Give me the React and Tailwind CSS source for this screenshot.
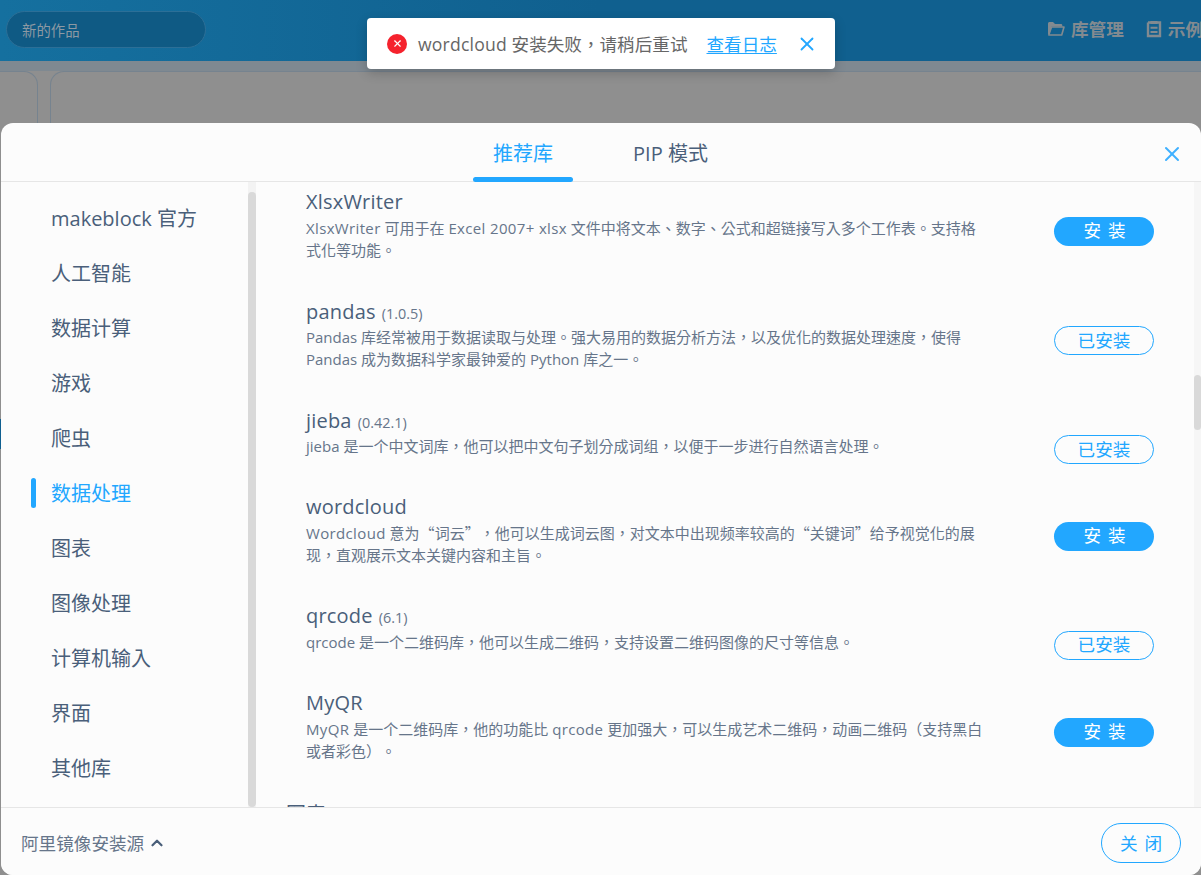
import React from 'react';
import { X, ChevronUp } from 'lucide-react';

const categories = ['makeblock 官方', '人工智能', '数据计算', '游戏', '爬虫', '数据处理', '图表', '图像处理', '计算机输入', '界面', '其他库'];

// full-width quotes, Open Sans would draw narrow ones
const Q = ({ children }) => <span className="font-['Noto_Sans_CJK_SC']">{children}</span>;
const L = ({ children }) => <span className="tracking-[0.35px]">{children}</span>;

const packages = [
  { name: 'XlsxWriter', gap: 'mb-[0.5px]', desc: <><L>XlsxWriter</L> 可用于在 <L>Excel 2007+ xlsx</L> 文件中将文本、数字、公式和超链接写入多个工作表。支持格<br />式化等功能。</>, installed: false },
  { name: 'pandas', version: '(1.0.5)', desc: <>Pandas 库经常被用于数据读取与处理。强大易用的数据分析方法，以及优化的数据处理速度，使得<br />Pandas 成为数据科学家最钟爱的 Python 库之一。</>, installed: true },
  { name: 'jieba', version: '(0.42.1)', gap: '-mb-[0.5px]', desc: 'jieba 是一个中文词库，他可以把中文句子划分成词组，以便于一步进行自然语言处理。', installed: true },
  { name: 'wordcloud', desc: <><L>Wordcloud</L> 意为<Q>“</Q>词云<Q>”</Q>，他可以生成词云图，对文本中出现频率较高的<Q>“</Q>关键词<Q>”</Q>给予视觉化的展<br />现，直观展示文本关键内容和主旨。</>, installed: false },
  { name: 'qrcode', version: '(6.1)', desc: 'qrcode 是一个二维码库，他可以生成二维码，支持设置二维码图像的尺寸等信息。', installed: true },
  { name: 'MyQR', desc: <><L>MyQR</L> 是一个二维码库，他的功能比 <L>qrcode</L> 更加强大，可以生成艺术二维码，动画二维码（支持黑白<br />或者彩色）。</>, installed: false },
];

function FolderIcon() {
  return (
    <svg width="18" height="16" viewBox="0 0 18 16" className="shrink-0">
      <path d="M1 2.500C1 1.700 1.700 1 2.500 1H6l2 2h6c.8 0 1.300.6 1.300 1.300V5.500H4.500L2.600 13H1z" fill="#828a90" />
      <path d="M4.500 6h12.500l-2.300 8H1.800z" fill="none" stroke="#828a90" strokeWidth="1.600" strokeLinejoin="round" />
    </svg>
  );
}

function ListIcon() {
  return (
    <svg width="16" height="18" viewBox="0 0 16 18" className="shrink-0">
      <path d="M2 2.500h3.500M10.500 2.500H14V16H2V2.500" fill="none" stroke="#828a90" strokeWidth="2.400" />
      <path d="M4.500 1h7v3h-7zM4.500 6.700h7v2h-7zM4.500 11h7v2h-7z" fill="#828a90" />
    </svg>
  );
}

function PackageRow({ pkg }) {
  return (
    <div className={`flex items-start ${pkg.gap || ''}`}>
      <div className="w-[680px] shrink-0 pb-[38.5px]">
        <div className="h-[24px] leading-[24px] text-[20px] tracking-[0.2px] text-[#4a5f7a]">
          {pkg.name}
          {pkg.version && <span className="ml-[6px] text-[14.4px] tracking-normal text-[#66758a]">{pkg.version}</span>}
        </div>
        <p className="mt-[2.5px] text-[15px] leading-[22px] text-[#66758a] whitespace-nowrap [text-spacing-trim:space-all]">{pkg.desc}</p>
      </div>
      <div className="ml-[68px] mt-[26.5px] h-0 shrink-0">
        {pkg.installed ? (
          <button className="w-[100px] h-[29px] rounded-full border border-[#22a7ff] text-[17.6px] leading-none text-[#22a7ff]">已安装</button>
        ) : (
          <button className="w-[100px] h-[29px] rounded-full bg-[#22a7ff] pl-[8px] text-[17.6px] leading-none text-white tracking-[7px]">安装</button>
        )}
      </div>
    </div>
  );
}

export default function App() {
  return (
    <div className="relative w-[1201px] h-[875px] overflow-hidden bg-[#8f8f8f] font-['Open_Sans','Noto_Sans_CJK_TC',sans-serif]">
      {/* page behind the modal */}
      <div className="flex items-center justify-between h-[61px] bg-gradient-to-r from-[#15709f] via-[#10608f] to-[#10608f] pl-[6px]">
        <div className="w-[200px] h-[37px] -mt-[2px] rounded-full border border-[#2c6f97] bg-[#0f5a84] pl-[15px] leading-[37px] text-[14.4px] text-[#8c99a3]">新的作品</div>
        <div className="flex items-center -mt-[2px] w-[154px] shrink-0 text-[17.6px] font-bold text-[#828a90] whitespace-nowrap overflow-hidden">
          <FolderIcon />
          <span className="ml-[6px]">库管理</span>
          <span className="ml-[22px]"><ListIcon /></span>
          <span className="ml-[6px]">示例</span>
        </div>
      </div>
      <div className="h-[10px] bg-[#7f8991]" />
      <div className="flex gap-[12px]">
        <div className="w-[38px] h-[60px] rounded-tr-[14px] border-t border-r border-[#76838f] bg-[#8f8f8f]" />
        <div className="flex-1 h-[60px] rounded-tl-[14px] border-t border-l border-[#76838f] bg-[#8f8f8f]" />
      </div>
      <div className="absolute left-0 top-[419px] w-[1px] h-[30px] bg-[#0f5f90]" />

      {/* toast */}
      <div className="absolute left-[367px] top-[18px] z-20 flex items-center w-[468px] h-[51px] rounded-[4px] bg-white pl-[20px] shadow-[0_4px_12px_rgba(0,0,0,0.2)]">
        <span className="flex items-center justify-center w-[20px] h-[20px] rounded-full bg-[#f5222d] text-white">
          <X size={11} strokeWidth={2.5} />
        </span>
        <span className="ml-[11px] pt-[1px] text-[17.6px] text-[#666666]"><span className="tracking-[0.2px]">wordcloud</span> 安装失败，请稍后重试</span>
        <a className="ml-[19px] pt-[1px] text-[17.6px] text-[#22a7ff] underline underline-offset-2">查看日志</a>
        <X size={22} strokeWidth={2} className="ml-[19px] text-[#22a7ff]" />
      </div>

      {/* modal */}
      <div className="absolute left-[1px] top-[123px] z-10 flex flex-col w-[1200px] h-[752px] rounded-[12px] bg-[#fcfcfc] overflow-hidden">
        <div className="relative flex justify-center shrink-0 h-[59px] border-b border-[#e6e6e6]">
          <div className="flex gap-[60px] ml-[-21px]">
            <div className="relative w-[100px] text-center leading-[62px] text-[20px] text-[#22a7ff]">
              推荐库
              <div className="absolute left-0 right-0 bottom-[-1px] h-[5px] rounded-full bg-[#22a7ff]" />
            </div>
            <div className="leading-[62px] text-[20px] text-[#4a5f7a]">PIP 模式</div>
          </div>
          <X size={24} strokeWidth={2} className="absolute right-[17px] top-[19px] text-[#3fb0ff]" />
        </div>

        <div className="flex flex-1 min-h-0">
          <div className="relative w-[247px] shrink-0 pt-[9px]">
            {categories.map((c) => (
              <div key={c} className={`relative h-[55px] pl-[50px] leading-[55px] text-[20px] ${c === '数据处理' ? 'text-[#22a7ff]' : 'text-[#4a5f7a]'}`}>
                {c === '数据处理' && <div className="absolute left-[30px] top-[12px] w-[5px] h-[30px] rounded-full bg-[#22a7ff]" />}
                {c}
              </div>
            ))}
          </div>
          <div className="w-[8px] shrink-0 bg-[#f3f3f3] pt-[10px]">
            <div className="h-full rounded-full bg-[#d9d9d9]" />
          </div>
          <div className="flex-1 min-w-0 pl-[50px] pt-[8px] overflow-hidden">
            {packages.map((p) => (
              <PackageRow key={p.name} pkg={p} />
            ))}
            <div className="-ml-[20px] text-[20px] text-[#4a5f7a]">图表</div>
          </div>
          <div className="w-[7px] shrink-0 bg-[#f6f6f6] pt-[193px]">
            <div className="h-[55px] rounded-full bg-[#d9d9d9]" />
          </div>
        </div>

        <div className="flex items-center justify-between shrink-0 h-[68px] border-t border-[#e6e6e6] bg-[#fcfcfc] px-[20px]">
          <div className="flex items-center mt-[3px] text-[17.6px] text-[#66758a]">
            阿里镜像安装源
            <ChevronUp size={18} strokeWidth={3} className="ml-[4px] text-[#4a5f7a]" />
          </div>
          <button className="w-[80px] h-[40px] mt-[3px] rounded-full border border-[#22a7ff] pl-[7px] text-[17.6px] tracking-[7px] text-[#22a7ff]">关闭</button>
        </div>
      </div>
    </div>
  );
}
